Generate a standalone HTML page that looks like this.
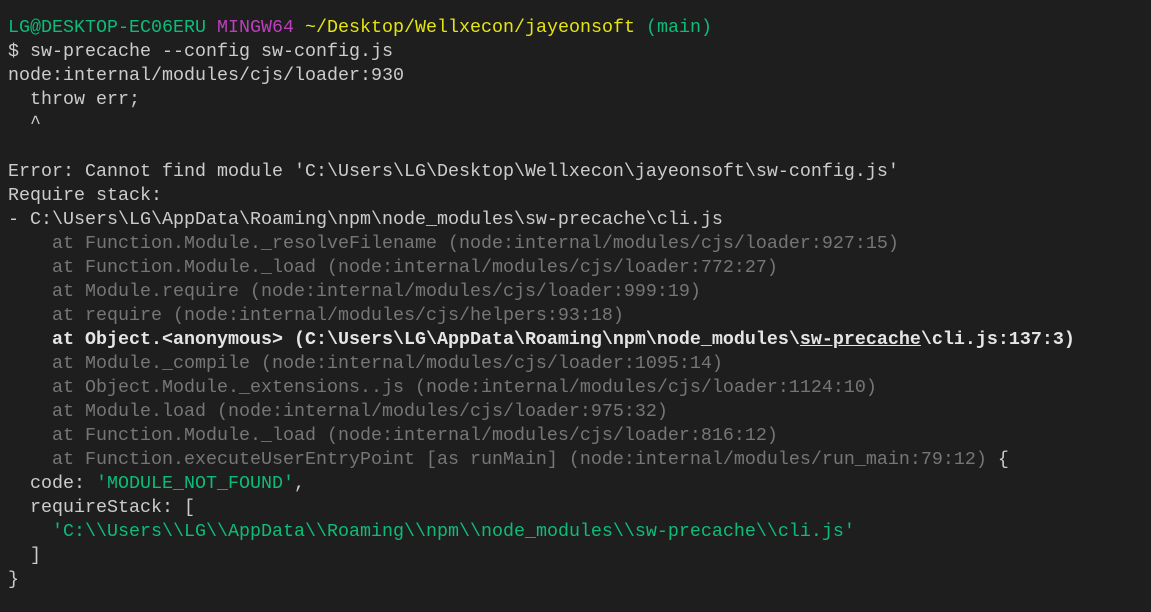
<!DOCTYPE html>
<html><head><meta charset="utf-8"><style>
html,body{margin:0;background:#1e1e1e;width:1151px;height:612px;overflow:hidden}
pre{margin:0;position:absolute;left:8px;top:16px;font-family:"Liberation Mono",monospace;font-size:18.33px;line-height:24px;color:#cccccc;white-space:pre}
.g{color:#0dbc79}.m{color:#bc3fbc}.y{color:#e5e510}.d{color:#767676}.b{color:#e5e5e5;font-weight:bold}.s{color:#0dbc79}
u{text-decoration:underline}
</style></head><body><pre><span class="g">LG@DESKTOP-EC06ERU</span> <span class="m">MINGW64</span> <span class="y">~/Desktop/Wellxecon/jayeonsoft</span> <span class="g">(main)</span>
$ sw-precache --config sw-config.js
node:internal/modules/cjs/loader:930
  throw err;
  ^

Error: Cannot find module 'C:\Users\LG\Desktop\Wellxecon\jayeonsoft\sw-config.js'
Require stack:
- C:\Users\LG\AppData\Roaming\npm\node_modules\sw-precache\cli.js
<span class="d">    at Function.Module._resolveFilename (node:internal/modules/cjs/loader:927:15)
    at Function.Module._load (node:internal/modules/cjs/loader:772:27)
    at Module.require (node:internal/modules/cjs/loader:999:19)
    at require (node:internal/modules/cjs/helpers:93:18)</span>
<span class="b">    at Object.&lt;anonymous&gt; (C:\Users\LG\AppData\Roaming\npm\node_modules\<u>sw-precache</u>\cli.js:137:3)</span>
<span class="d">    at Module._compile (node:internal/modules/cjs/loader:1095:14)
    at Object.Module._extensions..js (node:internal/modules/cjs/loader:1124:10)
    at Module.load (node:internal/modules/cjs/loader:975:32)
    at Function.Module._load (node:internal/modules/cjs/loader:816:12)
    at Function.executeUserEntryPoint [as runMain] (node:internal/modules/run_main:79:12)</span> {
  code: <span class="s">'MODULE_NOT_FOUND'</span>,
  requireStack: [
    <span class="s">'C:\\Users\\LG\\AppData\\Roaming\\npm\\node_modules\\sw-precache\\cli.js'</span>
  ]
}</pre></body></html>
